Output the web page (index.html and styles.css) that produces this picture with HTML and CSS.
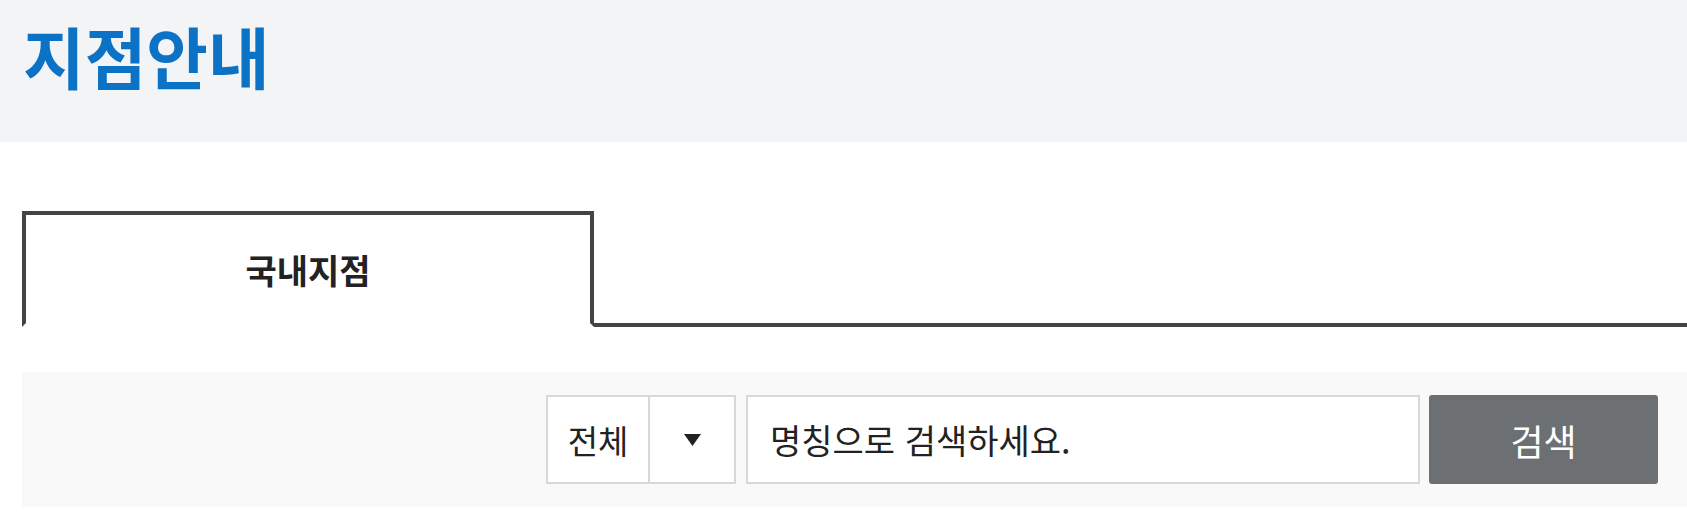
FILE: index.html
```html
<!DOCTYPE html>
<html lang="ko">
<head>
<meta charset="utf-8">
<title>지점안내</title>
<link rel="stylesheet" href="styles.css">
</head>
<body>
<header class="page-head">
  <h1 class="page-title">지점안내</h1>
</header>
<main class="content">
  <ul class="tabs">
    <li class="tab tab-active">국내지점</li>
  </ul>
  <form class="search-bar" onsubmit="return false;">
    <div class="select">
      <span class="select-label">전체</span>
      <span class="select-arrow">
        <svg width="17" height="12" viewBox="0 0 17 12" aria-hidden="true"><path d="M0 0H17L8.5 12Z" fill="#222"/></svg>
      </span>
    </div>
    <input class="search-input" type="text" placeholder="명칭으로 검색하세요.">
    <button class="search-btn" type="submit">검색</button>
  </form>
</main>
</body>
</html>
```
FILE: styles.css
```css
* { box-sizing: border-box; }
html, body { margin: 0; padding: 0; background: #fff; }
body {
  font-family: "Noto Sans CJK KR", "Noto Sans", sans-serif;
  color: #222;
  overflow: hidden;
}
.page-head {
  background: #f3f4f6;
  height: 142px;
  padding: 21px 0 0 23px;
}
.page-title {
  margin: 0;
  font-size: 67px;
  line-height: 1;
  font-weight: 700;
  color: #0b72c5;
}
.content {
  margin-left: 22px;
}
.tabs {
  list-style: none;
  margin: 69px 0 0 0;
  padding: 0;
  display: flex;
  border-bottom: 4px solid #444;
}
.tab {
  width: 572px;
  height: 116px;
  margin-bottom: -4px;
  border: 4px solid #444;
  border-bottom-color: #fff;
  background: #fff;
  display: flex;
  align-items: center;
  justify-content: center;
  font-size: 34px;
  font-weight: 700;
  color: #222;
}
.search-bar {
  margin: 45px 0 0 0;
  background: #f9f9f9;
  padding: 23px 29px 23px 0;
  display: flex;
  justify-content: flex-end;
  height: 135px;
}
.select {
  width: 190px;
  height: 89px;
  border: 2px solid #d8d8d8;
  background: #fff;
  display: flex;
}
.select-label {
  width: 102px;
  border-right: 2px solid #d8d8d8;
  display: flex;
  align-items: center;
  justify-content: center;
  font-size: 33px;
  color: #222;
}
.select-arrow {
  flex: 1;
  display: flex;
  align-items: center;
  justify-content: center;
}
.search-input {
  width: 674px;
  height: 89px;
  margin-left: 10px;
  border: 2px solid #d8d8d8;
  background: #fff;
  padding: 0 0 0 22px;
  font-family: inherit;
  font-size: 34px;
  color: #222;
  outline: none;
}
.search-input::placeholder {
  color: #222;
  opacity: 1;
}
.search-btn {
  width: 229px;
  height: 89px;
  margin-left: 9px;
  border: none;
  border-radius: 3px;
  background: #6d7073;
  color: #fff;
  font-family: inherit;
  font-size: 36px;
  padding: 0;
}
```
